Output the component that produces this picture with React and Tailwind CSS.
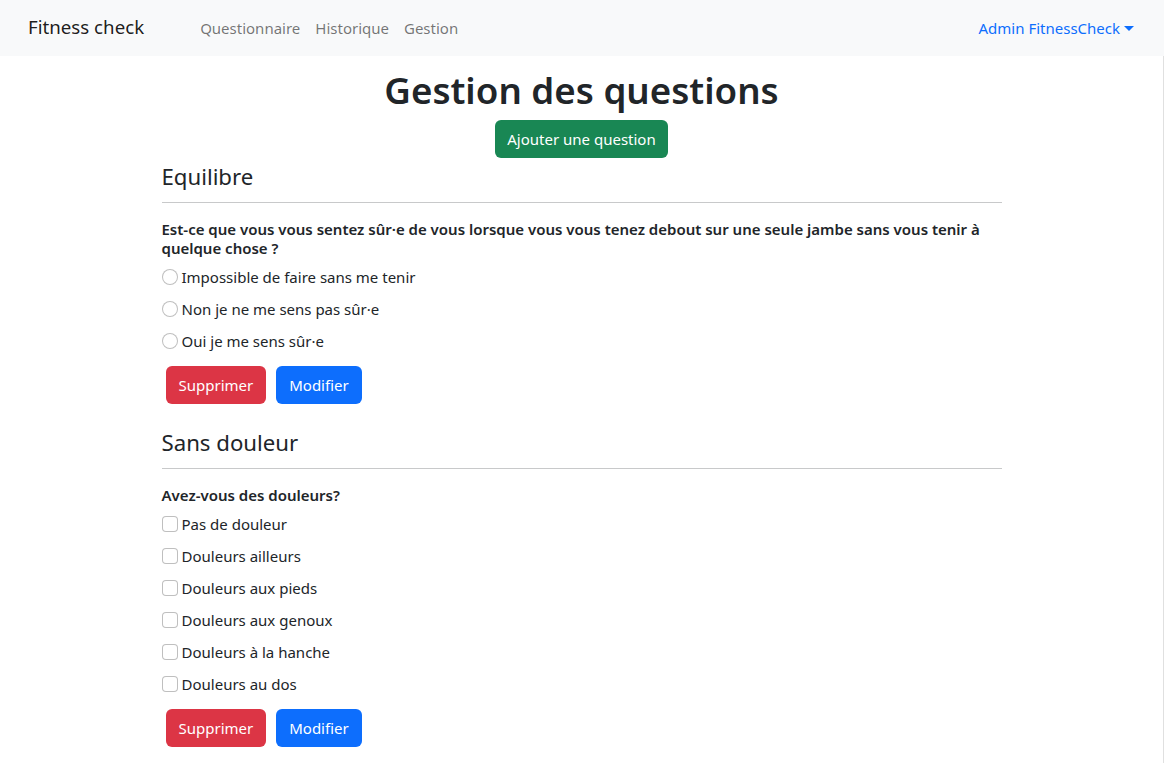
import React from 'react';

const questions = [
    {
        category: 'Equilibre',
        label: 'Est-ce que vous vous sentez sûr·e de vous lorsque vous vous tenez debout sur une seule jambe sans vous tenir à quelque chose ?',
        type: 'radio',
        options: ['Impossible de faire sans me tenir', 'Non je ne me sens pas sûr·e', 'Oui je me sens sûr·e'],
    },
    {
        category: 'Sans douleur',
        label: 'Avez-vous des douleurs?',
        type: 'checkbox',
        options: [
            'Pas de douleur',
            'Douleurs ailleurs',
            'Douleurs aux pieds',
            'Douleurs aux genoux',
            'Douleurs à la hanche',
            'Douleurs au dos',
        ],
    },
];

const Navbar = () => (
    <nav className="h-14 bg-[#f8f9fa] flex items-center pl-7 pr-[30px]">
        <span className="text-[18.7px] text-[#000000e6] mr-[56px] pb-[1px]">Fitness check</span>
        <div className="flex gap-[15px] text-[#0000008c]">
            <span>Questionnaire</span>
            <span>Historique</span>
            <span>Gestion</span>
        </div>
        <div className="ml-auto flex items-center text-[#0d6efd]">
            Admin FitnessCheck
            <span className="ml-[4px] mt-[1px] border-t-[5px] border-t-[#0d6efd] border-x-[5px] border-x-transparent" />
        </div>
    </nav>
);

const QuestionBlock = ({ q }) => (
    <section>
        <h4 className="text-[22.2px] leading-[34px] text-[#212529] mb-[8px]">{q.category}</h4>
        <hr className="border-t border-[#c8c9ca] mb-[17px]" />
        <h6 className="font-semibold leading-[19px] mb-[3px]">{q.label}</h6>
        <div className="flex flex-col">
            {q.options.map(opt => (
                <label key={opt} className="flex items-center h-8">
                    <span
                        className={`w-4 h-4 border border-[#00000040] bg-white shrink-0 ${q.type === 'radio' ? 'rounded-full' : 'rounded-[4px]'}`}
                    />
                    <span className="ml-1">{opt}</span>
                </label>
            ))}
        </div>
        <div className="flex gap-[10px] ml-1 mt-[9px]">
            <button className="bg-[#dc3545] text-white rounded-[6px] h-[38px] px-[13px]">Supprimer</button>
            <button className="bg-[#0d6efd] text-white rounded-[6px] h-[38px] px-[13px]">Modifier</button>
        </div>
    </section>
);

export default function App() {
    return (
        <div className="min-h-screen bg-white text-[#212529] text-[15px] font-['Noto_Sans',sans-serif]">
            <Navbar />
            <div className="border-r border-[#e0e0e0] min-h-[707px]">
                <main className="w-[840px] mx-auto pb-4">
                    <h1 className="text-[36.7px] leading-[48px] font-semibold text-center pt-[10px]">
                        Gestion des questions
                    </h1>
                    <div className="flex justify-center mt-[6px] mb-[2px]">
                        <button className="bg-[#198754] text-white rounded-[6px] h-[38px] px-3">Ajouter une question</button>
                    </div>
                    <div className="flex flex-col gap-[22px]">
                        {questions.map(q => (
                            <QuestionBlock key={q.category} q={q} />
                        ))}
                    </div>
                </main>
            </div>
        </div>
    );
}
